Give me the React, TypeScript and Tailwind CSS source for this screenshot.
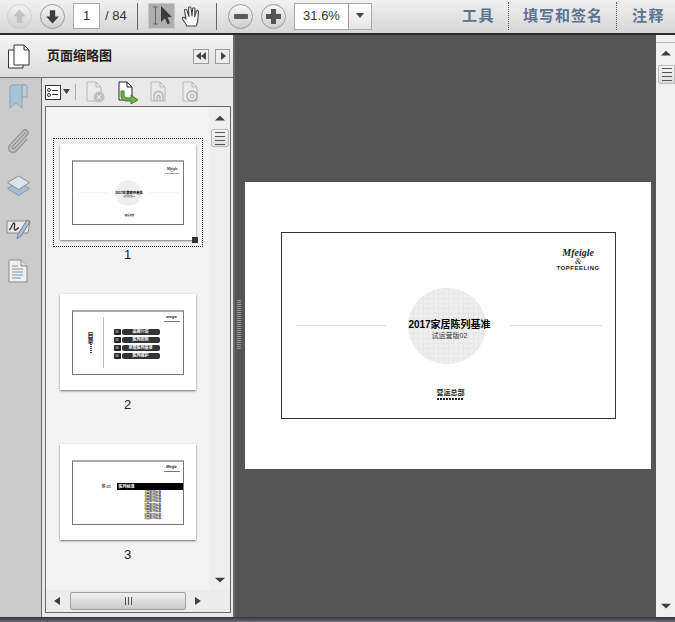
import React from "react";

const FONT = "[font-family:'Liberation_Sans','Noto_Sans_CJK_SC',sans-serif]";

function RoundBtn({ dim, children, className }: { dim?: boolean; children: React.ReactNode; className?: string }) {
  return (
    <div className={`w-[25px] h-[25px] rounded-full border flex items-center justify-center bg-gradient-to-b from-[#f6f6f6] to-[#cfcfcf] ${dim ? "border-[#c4c4c4]" : "border-[#9a9a9a]"} ${className ?? ""}`}>
      {children}
    </div>
  );
}

function Arrow({ down, color }: { down?: boolean; color: string }) {
  return (
    <svg width="17" height="17" viewBox="0 0 16 16">
      <path d={down ? "M5.5 2h5v6H14l-6 6.5L2 8h3.5z" : "M5.5 14h5V8H14L8 1.5 2 8h3.5z"} fill={color} />
    </svg>
  );
}

function Tri({ dir, className }: { dir: "up" | "down" | "left" | "right"; className?: string }) {
  const d = { up: "M0 7L5 1l5 6z", down: "M0 1l5 6 5-6z", left: "M8 0L2 5l6 5z", right: "M2 0l6 5-6 5z" }[dir];
  return (
    <svg width="10" height="8" viewBox="0 0 10 10" className={className} preserveAspectRatio="none">
      <path d={d} fill="#3f3f3f" />
    </svg>
  );
}

function Grip() {
  return (
    <div className="flex flex-col gap-[3px] w-[10px]">
      <div className="h-px bg-[#555]" />
      <div className="h-px bg-[#555]" />
      <div className="h-px bg-[#555]" />
      <div className="h-px bg-[#555]" />
    </div>
  );
}

function Toolbar() {
  return (
    <div className="h-[35px] shrink-0 flex items-center pb-[1px] bg-gradient-to-b from-[#f1f1f1] to-[#d6d6d6] border-b-2 border-[#2a2a2a] text-[#333]">
      <RoundBtn dim className="ml-[7px] opacity-70"><Arrow color="#b5b5b5" /></RoundBtn>
      <RoundBtn className="ml-[8px]"><Arrow down color="#3d3d3d" /></RoundBtn>
      <div className="ml-[8px] w-[27px] h-[26px] bg-white border border-[#a8a8a8] flex items-center justify-center text-[13px]">1</div>
      <div className="ml-[5px] w-[27px] text-[13px] whitespace-nowrap">/ 84</div>
      <div className="ml-[5px] w-px h-[27px] bg-[#666]" />
      <div className="ml-[10px] w-[27px] h-[26px] bg-[#aeaeae] border border-[#c9c9c9] flex items-center justify-center">
        <svg width="24" height="22" viewBox="0 0 24 22">
          <path d="M3 2h5M3 19h5M5.5 2v17" stroke="#666" strokeWidth="1" fill="none" />
          <path d="M11 1l11 11-4.5.3 2.5 6-2.5 1-2.6-6L11 17z" fill="#3a3a3a" />
        </svg>
      </div>
      <div className="ml-[5px] w-[24px] h-[24px] flex items-center justify-center">
        <svg width="22" height="23" viewBox="0 0 22 23">
          <path d="M6 21c-1-3-5-6-4.600-8 .5-1.500 2.300-.7 3.600 1.200L3.500 5.500c0-1.600 2-1.600 2.500 0l2 6L7.500 3c0-1.700 2.300-1.700 2.500 0l1 8 .6-7.200c.2-1.600 2.300-1.400 2.300.2l-.2 7.800 1.800-5.600c.5-1.400 2.300-.9 2 .7L16.500 17c-.5 2-1 3-1.500 4z" fill="#fff" stroke="#444" strokeWidth="1.100" strokeLinejoin="round" />
        </svg>
      </div>
      <div className="ml-[12px] w-px h-[27px] bg-[#666]" />
      <RoundBtn className="ml-[11px]"><div className="w-[14px] h-[5px] rounded-[1px] bg-[#5a5a5a]" /></RoundBtn>
      <RoundBtn className="ml-[8px]">
        <svg width="17" height="17" viewBox="0 0 17 17"><path d="M6 1h5v5h5v5h-5v5H6v-5H1V6h5z" fill="#555" /></svg>
      </RoundBtn>
      <div className="ml-[8px] w-[78px] h-[27px] flex border border-[#a8a8a8] bg-gradient-to-b from-white to-[#e4e4e4]">
        <div className="w-[53px] bg-white flex items-center justify-center text-[13px]">31.6%</div>
        <div className="flex-1 border-l border-[#999] flex items-center justify-center">
          <svg width="10" height="6" viewBox="0 0 10 6"><path d="M1 0h8L5 5z" fill="#444" /></svg>
        </div>
      </div>
      <div className="ml-[90px] text-[15px] tracking-[1.500px] font-bold text-[#5d7394] whitespace-nowrap">工具</div>
      <div className="ml-[13px] h-[28px] border-l border-dotted border-[#555]" />
      <div className="ml-[14px] text-[15px] tracking-[1px] font-bold text-[#5d7394] whitespace-nowrap">填写和签名</div>
      <div className="ml-[13px] h-[28px] border-l border-dotted border-[#555]" />
      <div className="ml-[15px] text-[15px] tracking-[1.500px] font-bold text-[#5d7394] whitespace-nowrap">注释</div>
    </div>
  );
}

function Logo() {
  return (
    <div className="flex flex-col items-center leading-none text-[#222]">
      <div className="text-[10px] leading-[10px] italic font-bold [font-family:'Liberation_Serif',serif]">Mfeigle</div>
      <div className="text-[8px] leading-[7px] italic [font-family:'Liberation_Serif',serif]">&amp;</div>
      <div className="text-[6px] leading-[7px] tracking-[0.500px] font-bold whitespace-nowrap">TOPFEELING</div>
    </div>
  );
}

function CoverBody() {
  return (
    <div className="relative w-[333px] h-[185px] bg-white">
      <div className="absolute left-[275px] top-[15px]"><Logo /></div>
      <div className="absolute left-[14px] top-[92px] w-[90px] h-px bg-[#dcdcdc]" />
      <div className="absolute left-[228px] top-[92px] w-[92px] h-px bg-[#dcdcdc]" />
      <div className="absolute left-[126px] top-[55px] w-[78px] h-[76px] rounded-full bg-[#eeeeee] bg-[linear-gradient(#e6e6e6_1px,transparent_1px),linear-gradient(90deg,#e6e6e6_1px,transparent_1px)] bg-[size:5px_5px]" />
      <div className="absolute left-[126px] top-[85px] w-[84px] text-center text-[10px] leading-[14px] font-bold text-black whitespace-nowrap">2017家居陈列基准</div>
      <div className="absolute left-[126px] top-[98px] w-[84px] text-center text-[7px] leading-[10px] text-[#333] whitespace-nowrap">试运营版02</div>
      <div className="absolute left-[155px] top-[155px] w-[28px] text-center text-[7px] leading-[10px] font-bold text-[#222] whitespace-nowrap">营运总部</div>
      <div className="absolute left-[155px] top-[165px] w-[27px] h-[2px] bg-[repeating-linear-gradient(90deg,#222_0_2px,transparent_2px_3px)]" />
    </div>
  );
}

function Thumb1() {
  return (
    <div className="w-[110px] h-[62px] overflow-hidden">
      <div className="w-[333px] h-[185px] origin-top-left scale-[0.334]"><CoverBody /></div>
    </div>
  );
}

function Thumb2() {
  const items = ["品牌介绍", "陈列原则", "家居陈列基准", "陈列维护"];
  return (
    <div className="relative w-[110px] h-[62px] bg-white">
      <div className="absolute right-[3px] top-[4px] w-[16px] h-[7px] overflow-hidden flex flex-col items-center">
        <div className="text-[3px] leading-[3px] italic font-bold">Mfeigle</div>
        <div className="w-full h-px bg-[#777] mt-[2px]" />
      </div>
      <div className="absolute left-[30px] top-[5px] w-px h-[51px] bg-[#bbb]" />
      <div className="absolute left-[15px] top-[20px] w-[6px] text-[6px] leading-[6px] font-bold text-[#222]">目录</div>
      <div className="absolute left-[17px] top-[32px] flex flex-col gap-[1px]">
        {[0, 1, 2, 3, 4].map((i) => <div key={i} className="w-[2px] h-[1px] bg-[#333]" />)}
      </div>
      <div className="absolute left-[41px] top-[17px] flex flex-col gap-[2px]">
        {items.map((t, i) => (
          <div key={t} className="flex gap-[1px]">
            <div className="w-[7px] h-[6px] rounded-[1px] bg-[#222] text-white text-[3px] leading-[6px] text-center">0{i + 1}</div>
            <div className="w-[38px] h-[6px] rounded-[2px] bg-[#333] text-white text-[4px] leading-[6px] text-center font-bold whitespace-nowrap">{t}</div>
          </div>
        ))}
      </div>
    </div>
  );
}

function Thumb3() {
  return (
    <div className="relative w-[110px] h-[62px] bg-white">
      <div className="absolute right-[3px] top-[4px] w-[16px] flex flex-col items-center">
        <div className="text-[3px] leading-[3px] italic font-bold">Mfeigle</div>
        <div className="w-full h-px bg-[#777] mt-[2px]" />
      </div>
      <div className="absolute left-[29px] top-[21px] text-[4px] leading-[7px] font-bold text-[#333] whitespace-nowrap">章 01</div>
      <div className="absolute left-[44px] top-[21px] right-0 h-[7px] bg-black text-white text-[4px] leading-[7px] pl-[2px] font-bold">陈列标准</div>
      <div className="absolute left-[72px] top-[29px] flex flex-col">
        {[1, 2, 3, 4, 5, 6, 7, 8, 9].map((i) => (
          <div key={i} className="w-[14px] text-[3px] leading-[3.300px] font-bold text-[#444] whitespace-nowrap">{i}层陈列标准</div>
        ))}
      </div>
    </div>
  );
}

function ThumbItem({ n, selected, children }: { n: number; selected?: boolean; children: React.ReactNode }) {
  return (
    <div className="flex flex-col items-center">
      <div className={`w-[150px] h-[109px] pt-[5px] pl-[6px] border border-dotted ${selected ? "border-black" : "border-transparent"}`}>
        <div className="relative w-[136px] h-[96px] bg-white shadow-[0_1px_2px_#777] flex items-center justify-center">
          <div className="border border-[#777] border-t-2 border-t-[#aaa]">{children}</div>
          {selected && <div className="absolute right-[-2px] bottom-[-3px] w-[6px] h-[6px] bg-[#333]" />}
        </div>
      </div>
      <div className="h-[16px] text-[13px] leading-[16px] text-[#222]">{n}</div>
    </div>
  );
}

function Rail() {
  return (
    <div className="w-[42px] shrink-0 bg-[#cbcbcb] border-r border-[#6a6a6a] flex flex-col items-center pt-[6px] gap-[19px] pr-[5px]">
      <svg width="20" height="26" viewBox="0 0 20 26">
        <path d="M2 3c0-1.500 1-2 2-2h13c-2 0-3 1-3 3v20l-6-5-6 5z" fill="#a9c3d6" stroke="#8ba3b5" />
        <path d="M14 4c0-2 1-3 3-3s2 1 2 3v9h-5z" fill="#bdd0de" stroke="#8ba3b5" />
      </svg>
      <svg width="24" height="26" viewBox="0 0 24 26">
        <path d="M20 3L7 17c-2 2 0 4 2 2L21 6c3-3-1-7-4-4L4 16c-4 4 2 10 6 6l11-12" fill="none" stroke="#9a9a9a" strokeWidth="1.800" />
      </svg>
      <svg width="25" height="25" viewBox="0 0 25 25">
        <path d="M12.500 8l11 6.500-11 7-11-7z" fill="#a9bfd1" stroke="#7f95a6" />
        <path d="M12.500 2l11 6.500-11 7-11-7z" fill="#dce4ea" stroke="#7f8f9c" />
      </svg>
      <svg width="25" height="22" viewBox="0 0 25 22">
        <path d="M1 3h23l-2 12H1z" fill="#e8e8e8" stroke="#8b8b8b" />
        <path d="M3 12c3-1 3-7 5-7s-1 7 1 7 2-2 4-2" fill="none" stroke="#333" strokeWidth="1.300" />
        <path d="M21 2l3 2-9 14-4 3 1-5z" fill="#a9bfd1" stroke="#6f8496" />
      </svg>
      <svg width="20" height="24" viewBox="0 0 20 24">
        <path d="M1 1h12l6 6v16H1z" fill="#f0f0f0" stroke="#8b8b8b" />
        <path d="M13 1v6h6" fill="#ddd" stroke="#8b8b8b" />
        <path d="M4 7h6M4 10h11M4 13h11M4 16h11M4 19h9" stroke="#9fb4c6" strokeWidth="1.300" />
      </svg>
    </div>
  );
}

function DocIcon({ children, dim }: { children: React.ReactNode; dim?: boolean }) {
  return (
    <svg width="20" height="23" viewBox="0 0 20 23" className={dim ? "opacity-50" : ""}>
      <path d="M2 1h9l5 5v14H2z" fill={dim ? "#eee" : "#fff"} stroke={dim ? "#888" : "#222"} />
      <path d="M11 1v5h5" fill="none" stroke={dim ? "#888" : "#222"} />
      {children}
    </svg>
  );
}

function PanelTools() {
  return (
    <div className="h-[28px] shrink-0 flex items-center pl-[3px]">
      <div className="w-[16px] h-[15px] border border-[#333] bg-white flex items-center pl-[1px] gap-[1px]">
        <div className="flex flex-col gap-[1px]">
          <div className="w-[4px] h-[4px] rounded-full border border-[#333]" />
          <div className="w-[4px] h-[4px] rounded-full border border-[#333]" />
        </div>
        <div className="flex flex-col gap-[3px]">
          <div className="w-[6px] h-px bg-[#333]" />
          <div className="w-[6px] h-px bg-[#333]" />
        </div>
      </div>
      <svg width="9" height="6" viewBox="0 0 9 6" className="ml-[1px]"><path d="M1 0h7L4.500 5z" fill="#444" /></svg>
      <div className="ml-[4px] w-px h-[16px] bg-[#aaa]" />
      <div className="ml-[9px]">
        <DocIcon dim><circle cx="14" cy="16" r="5.500" fill="#999" /><path d="M12 14l4 4M16 14l-4 4" stroke="#fff" /></DocIcon>
      </div>
      <div className="ml-[12px]">
        <svg width="22" height="23" viewBox="0 0 22 23">
          <path d="M2 1h8l5 5v13H2z" fill="#fff" stroke="#222" />
          <path d="M10 1v5h5" fill="none" stroke="#222" />
          <path d="M7 10v4c0 2 2 3 4 3h3v-3l7 5-7 4v-3h-4c-3 0-6-2-6-5v-5z" fill="#6fb24a" stroke="#3f7f2a" />
        </svg>
      </div>
      <div className="ml-[10px]">
        <DocIcon dim><path d="M5 20v-5a4.500 4.500 0 0 1 9 0v5M8 20v-4a1.500 1.500 0 0 1 3 0v4" fill="none" stroke="#777" strokeWidth="1.300" /></DocIcon>
      </div>
      <div className="ml-[12px]">
        <DocIcon dim><circle cx="11" cy="15" r="5" fill="none" stroke="#777" strokeWidth="1.300" /><circle cx="11" cy="15" r="2" fill="none" stroke="#777" /></DocIcon>
      </div>
    </div>
  );
}

function ThumbList() {
  return (
    <div className="h-[507px] w-[186px] ml-[3px] border border-[#6a6a6a] bg-[#f3f3f3] flex flex-col">
      <div className="flex-1 min-h-0 flex">
        <div className="flex-1 overflow-hidden flex flex-col items-center pt-[31px] gap-[25px]">
          <ThumbItem n={1} selected><Thumb1 /></ThumbItem>
          <ThumbItem n={2}><Thumb2 /></ThumbItem>
          <ThumbItem n={3}><Thumb3 /></ThumbItem>
        </div>
        <div className="w-[21px] shrink-0 bg-[#efefef] flex flex-col items-center pt-[8px]">
          <Tri dir="up" />
          <div className="mt-[6px] w-[18px] h-[18px] rounded-[2px] border border-[#bbb] bg-gradient-to-b from-[#f5f5f5] to-[#dcdcdc] flex items-center justify-center"><Grip /></div>
          <div className="flex-1" />
          <Tri dir="down" className="mb-[5px]" />
        </div>
      </div>
      <div className="h-[22px] shrink-0 bg-[#ececec] flex items-center pl-[6px]">
        <Tri dir="left" />
        <div className="ml-[8px] w-[116px] h-[18px] rounded-[2px] border border-[#a0a0a0] bg-gradient-to-b from-[#f2f2f2] to-[#c9c9c9] flex items-center justify-center gap-[2px]">
          <div className="w-px h-[8px] bg-[#555]" />
          <div className="w-px h-[8px] bg-[#555]" />
          <div className="w-px h-[8px] bg-[#555]" />
        </div>
        <Tri dir="right" className="ml-[7px]" />
      </div>
    </div>
  );
}

function Sidebar() {
  return (
    <div className="w-[235px] shrink-0 flex flex-col border-r-2 border-[#6a6a6a] bg-[#e9e9e9]">
      <div className="h-[43px] shrink-0 flex items-center bg-gradient-to-b from-[#f4f4f4] to-[#dddddd] border-b border-[#6f6f6f]">
        <svg width="23" height="25" viewBox="0 0 23 25" className="ml-[7px]">
          <path d="M1.500 6H16v18H1.500z" fill="#fff" stroke="#333" />
          <path d="M7 1h10l5 5v15H7z" fill="#fff" stroke="#333" />
          <path d="M17 1v5h5" fill="none" stroke="#333" />
        </svg>
        <div className="ml-[17px] text-[13px] font-bold text-[#222] whitespace-nowrap">页面缩略图</div>
        <div className="ml-[auto] w-[16px] h-[15px] border border-[#9a9a9a] bg-[#ededed] flex items-center justify-center">
          <svg width="12" height="8" viewBox="0 0 12 8"><path d="M6 0L1 4l5 4zM11 0L6 4l5 4z" fill="#444" /></svg>
        </div>
        <div className="ml-[6px] mr-[3px] w-[15px] h-[15px] border border-[#9a9a9a] bg-[#ededed] flex items-center justify-center">
          <svg width="6" height="8" viewBox="0 0 6 8"><path d="M1 0l5 4-5 4z" fill="#444" /></svg>
        </div>
      </div>
      <div className="flex-1 min-h-0 flex">
        <Rail />
        <div className="flex-1 min-w-0 flex flex-col">
          <PanelTools />
          <ThumbList />
        </div>
      </div>
    </div>
  );
}

function Viewer() {
  return (
    <div className="relative flex-1 bg-[#555555] flex items-center justify-center">
      <div className="absolute left-[2px] top-[265px] w-[4px] h-[50px] bg-[repeating-linear-gradient(#999_0_1px,transparent_1px_2px)]" />
      <div className="w-[406px] h-[287px] bg-white flex items-center justify-center ml-[4px] mt-[-2px]">
        <div className="border border-[#333] ml-[1px]"><CoverBody /></div>
      </div>
    </div>
  );
}

function MainScroll() {
  return (
    <div className="w-[19px] shrink-0 bg-[#f0f0f0] flex flex-col items-center">
      <div className="h-[8px] w-full border-b border-[#bbb]" />
      <Tri dir="up" className="mt-[7px]" />
      <div className="mt-[7px] ml-[2px] w-[17px] h-[19px] rounded-l-[2px] border border-[#bbb] bg-gradient-to-b from-[#f5f5f5] to-[#dcdcdc] flex items-center justify-center"><Grip /></div>
      <div className="flex-1" />
      <Tri dir="down" className="mb-[6px]" />
    </div>
  );
}

export default function App() {
  return (
    <div className={`w-[675px] h-[622px] overflow-hidden flex flex-col bg-[#555] ${FONT}`}>
      <Toolbar />
      <div className="flex-1 min-h-0 flex">
        <Sidebar />
        <Viewer />
        <MainScroll />
      </div>
      <div className="h-[5px] shrink-0 bg-gradient-to-b from-[#333] to-[#6a7078]" />
    </div>
  );
}
